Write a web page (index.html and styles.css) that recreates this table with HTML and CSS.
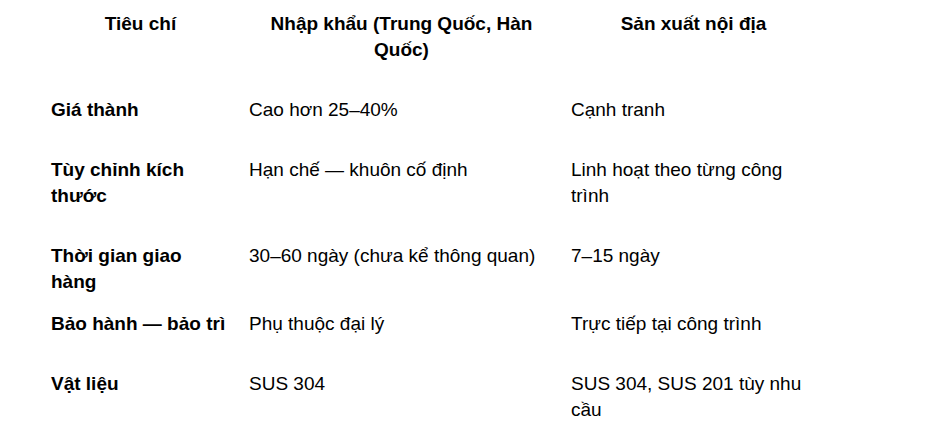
FILE: index.html
```html
<!DOCTYPE html>
<html lang="vi">
<head>
<meta charset="utf-8">
<link rel="stylesheet" href="styles.css">
</head>
<body>
<table class="cmp">
  <colgroup>
    <col class="c1">
    <col class="c2">
    <col class="c3">
  </colgroup>
  <thead>
    <tr>
      <th class="k"><p>Tiêu chí</p></th>
      <th class="m"><p>Nhập khẩu (Trung Quốc, Hàn Quốc)</p></th>
      <th class="l"><p>Sản xuất nội địa</p></th>
    </tr>
  </thead>
  <tbody>
    <tr>
      <td class="k"><strong>Giá thành</strong></td>
      <td class="m"><p>Cao hơn 25–40%</p></td>
      <td class="l"><p>Cạnh tranh</p></td>
    </tr>
    <tr>
      <td class="k"><strong>Tùy chỉnh kích thước</strong></td>
      <td class="m"><p>Hạn chế — khuôn cố định</p></td>
      <td class="l"><p>Linh hoạt theo từng công trình</p></td>
    </tr>
    <tr>
      <td class="k"><strong>Thời gian giao hàng</strong></td>
      <td class="m"><p>30–60 ngày (chưa kể thông quan)</p></td>
      <td class="l"><p>7–15 ngày</p></td>
    </tr>
    <tr>
      <td class="k"><strong>Bảo hành — bảo trì</strong></td>
      <td class="m"><p>Phụ thuộc đại lý</p></td>
      <td class="l"><p>Trực tiếp tại công trình</p></td>
    </tr>
    <tr>
      <td class="k"><strong>Vật liệu</strong></td>
      <td class="m"><p>SUS 304</p></td>
      <td class="l"><p>SUS 304, SUS 201 tùy nhu cầu</p></td>
    </tr>
  </tbody>
</table>
</body>
</html>
```
FILE: styles.css
```css
html, body {
  margin: 0;
  padding: 0;
  background: #ffffff;
}
body {
  font-family: "Liberation Sans", Arial, sans-serif;
  font-size: 19px;
  line-height: 26px;
  color: #000000;
}
.cmp {
  border-collapse: collapse;
  table-layout: fixed;
  margin: 3px 0 0 51px;
  width: 765px;
}
.c1 { width: 198px; }
.c2 { width: 322px; }
.c3 { width: 245px; }
.cmp th,
.cmp td {
  padding: 8px 0;
  vertical-align: top;
  text-align: left;
}
.cmp th { text-align: center; font-weight: bold; }
.cmp .k { padding-right: 19px; }
.cmp .m { padding-right: 17px; }
.cmp p {
  margin: 0 0 18px 0;
}
```
